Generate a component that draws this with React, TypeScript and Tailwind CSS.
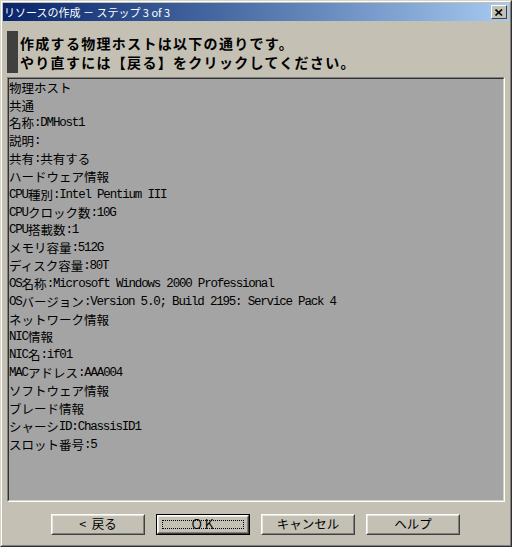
import React from "react";

const lines = [
  "物理ホスト",
  "共通",
  "名称:DMHost1",
  "説明:",
  "共有:共有する",
  "ハードウェア情報",
  "CPU種別:Intel Pentium III",
  "CPUクロック数:10G",
  "CPU搭載数:1",
  "メモリ容量:512G",
  "ディスク容量:80T",
  "OS名称:Microsoft Windows 2000 Professional",
  "OSバージョン:Version 5.0; Build 2195: Service Pack 4",
  "ネットワーク情報",
  "NIC情報",
  "NIC名:if01",
  "MACアドレス:AAA004",
  "ソフトウェア情報",
  "ブレード情報",
  "シャーシID:ChassisID1",
  "スロット番号:5",
];

function Mixed({ text }: { text: string }) {
  const parts = text.match(/[\x00-\x7F]+|[^\x00-\x7F]+/g) || [];
  return (
    <>
      {parts.map((p, i) =>
        /^[\x00-\x7F]/.test(p) ? (
          <span key={i} className="font-['Liberation_Mono',monospace] tracking-[-1.2px] whitespace-pre leading-none">
            {p}
          </span>
        ) : (
          <span key={i} className="leading-none">{p}</span>
        )
      )}
    </>
  );
}

function Button({ label, isDefault }: { label: string; isDefault?: boolean }) {
  const inner = (
    <div className="h-full w-full border border-t-white border-l-white border-r-[#404040] border-b-[#404040]">
      <div className="h-full w-full border border-t-[#e8e6e0] border-l-[#e8e6e0] border-r-[#808080] border-b-[#808080] flex items-center justify-center whitespace-pre">
        {isDefault ? (
          <div className="w-[calc(100%-6px)] h-[calc(100%-6px)] border border-dotted border-black flex items-center justify-center">
            {label}
          </div>
        ) : (
          label
        )}
      </div>
    </div>
  );
  return (
    <div
      className={
        "w-[94px] h-[21px] text-[12.5px] leading-none text-black font-['Noto_Sans_CJK_JP',sans-serif] " +
        (isDefault ? "border border-black" : "")
      }
    >
      {inner}
    </div>
  );
}

export default function App() {
  return (
    <div className="w-[512px] h-[547px] bg-[#c4c0b4] border border-t-[#d8d4c8] border-l-[#d8d4c8] border-r-[#303030] border-b-[#303030]">
      <div className="w-full h-full border border-t-white border-l-white border-r-[#808080] border-b-[#808080] p-[1px] flex flex-col">
        {/* title bar */}
        <div className="h-[18px] flex items-center bg-gradient-to-r from-[#0a246a] to-[#a6caf0] pl-[1px] pr-[2px]">
          <span className="text-white text-[11px] leading-none font-['Noto_Sans_CJK_JP',sans-serif] whitespace-pre">
            リソースの作成 － ステップ 3 of 3
          </span>
          <div className="ml-auto w-[16px] h-[14px] bg-[#c4c0b4] border border-t-white border-l-white border-r-[#404040] border-b-[#404040] flex items-center justify-center">
            <svg width="8" height="7" viewBox="0 0 8 7">
              <path d="M0.5 0.5 L7 6.5 M7 0.5 L0.5 6.5" stroke="black" strokeWidth="1.6" fill="none" />
            </svg>
          </div>
        </div>
        {/* body */}
        <div className="flex-1 flex flex-col px-[4px]">
          <div className="mt-[10px] h-[42px] flex">
            <div className="w-[11px] h-full bg-[#404040]" />
            <div className="pl-[2px] pt-[3px] font-['Noto_Sans_CJK_JP',sans-serif] font-bold text-[14px] leading-[19px] tracking-[1.3px] text-black">
              <div>作成する物理ホストは以下の通りです。</div>
              <div>やり直すには【戻る】をクリックしてください。</div>
            </div>
          </div>
          <div className="mt-[4px] h-[425px] border border-t-[#808080] border-l-[#808080] border-r-white border-b-white">
            <div className="w-full h-full border border-t-[#303030] border-l-[#303030] border-r-[#d4d0c8] border-b-[#d4d0c8] bg-[#a4a4a4] font-['Noto_Sans_CJK_JP',sans-serif] text-[12.5px] text-black">
              {lines.map((l, i) => (
                <div key={i} className="h-[17.85px] flex items-center whitespace-pre">
                  <Mixed text={l} />
                </div>
              ))}
            </div>
          </div>
          <div className="mt-[12px] flex justify-center gap-[11px] -ml-[1px]">
            <Button label="<  戻る" />
            <Button label="ＯＫ" isDefault />
            <Button label="キャンセル" />
            <Button label="ヘルプ" />
          </div>
        </div>
      </div>
    </div>
  );
}
